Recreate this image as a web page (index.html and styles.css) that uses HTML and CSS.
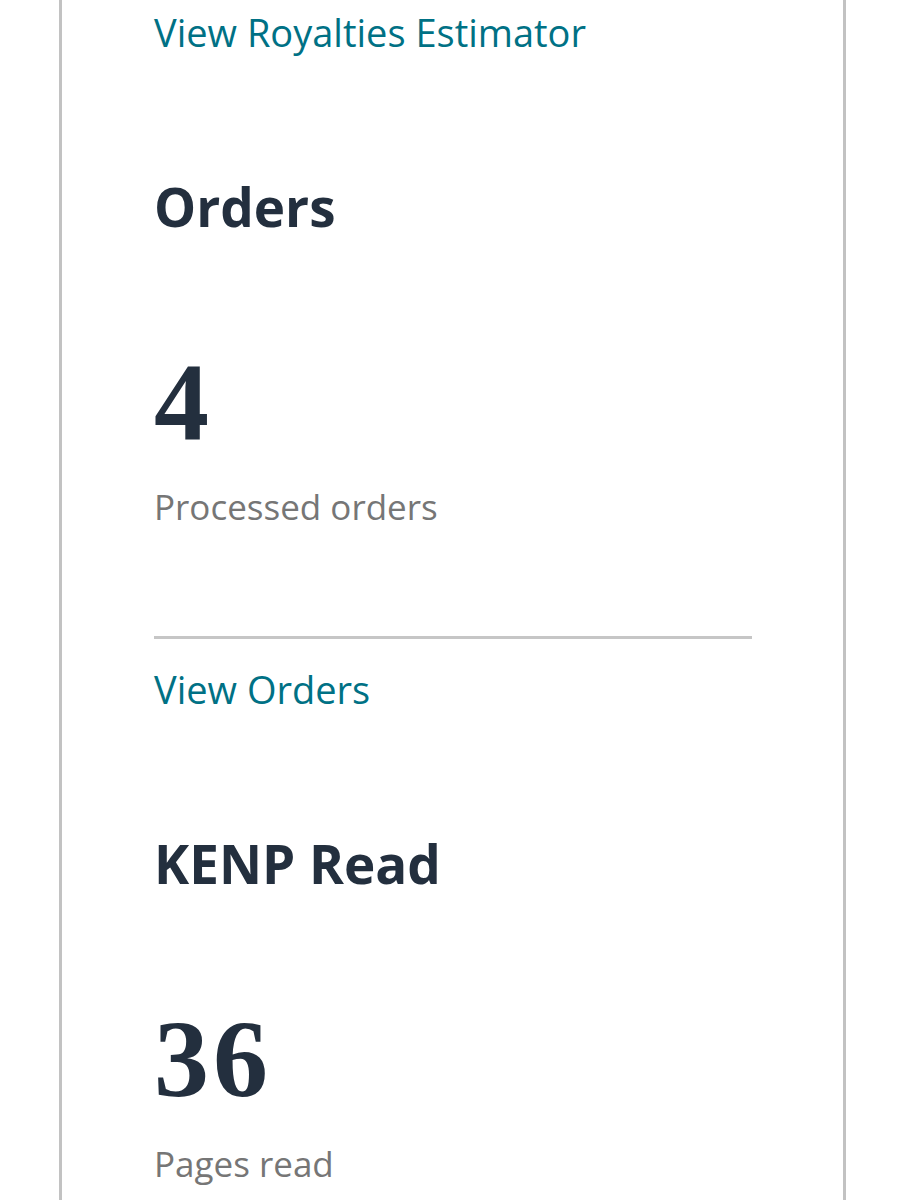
FILE: index.html
```html
<!DOCTYPE html>
<html lang="en">
<head>
    <meta charset="UTF-8">
    <meta name="viewport" content="width=device-width, initial-scale=1.0">
    <title>Dashboard</title>
    <link rel="stylesheet" href="styles.css">
</head>
<body>

    <!-- Dashboard card -->
    <div class="card">

        <a class="card-link" href="#">View Royalties Estimator</a>

        <!-- Orders -->
        <section class="metric">
            <h2 class="metric-title">Orders</h2>
            <div class="metric-value">4</div>
            <p class="metric-label">Processed orders</p>
        </section>

        <hr class="divider">
        <a class="card-link" href="#">View Orders</a>

        <!-- KENP -->
        <section class="metric">
            <h2 class="metric-title">KENP Read</h2>
            <div class="metric-value">36</div>
            <p class="metric-label">Pages read</p>
        </section>

    </div>

</body>
</html>
```

FILE: styles.css
```css
body {
    margin: 0;
    padding: 0;
    background-color: #ffffff;
    font-family: "Open Sans", Arial, sans-serif;
}

.card {
    margin-left: 59px;
    width: 787px;
    box-sizing: border-box;
    border-left: 3px solid #c2c2c2;
    border-right: 3px solid #c2c2c2;
    padding: 7px 91px 40px 92px;
    min-height: 1200px;
}

.card-link {
    display: block;
    color: #007185;
    font-size: 38px;
    line-height: 50px;
    text-decoration: none;
}

.metric {
    padding-top: 115px;
}

.metric-title {
    margin: 0;
    color: #232f3e;
    font-size: 53px;
    font-weight: 700;
    line-height: 70px;
}

.metric-value {
    margin-top: 110px;
    color: #232f3e;
    font-family: "Liberation Serif", "Times New Roman", serif;
    font-size: 110px;
    font-weight: 700;
    line-height: 100px;
    letter-spacing: 4px;
}

.metric-label {
    margin: 30px 0 0;
    color: #767676;
    font-size: 35px;
    line-height: 50px;
}

.divider {
    margin: 104px 0 25px;
    border: none;
    border-top: 3px solid #c6c6c6;
}
```
